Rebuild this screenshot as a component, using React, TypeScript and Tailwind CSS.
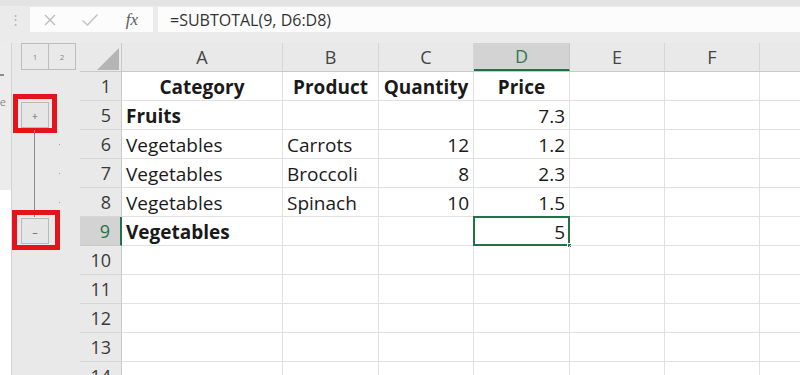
import type { ReactNode } from "react"

const cols = [
  { id: "A", w: "w-[161px]" },
  { id: "B", w: "w-[96px]" },
  { id: "C", w: "w-[95px]" },
  { id: "D", w: "w-[96px]" },
  { id: "E", w: "w-[95px]" },
  { id: "F", w: "w-[95px]" },
]

type Cell = { v: string; bold?: boolean; align?: "left" | "center" | "right" }

const rows: { n: number; cells: Cell[] }[] = [
  {
    n: 1,
    cells: [
      { v: "Category", bold: true, align: "center" },
      { v: "Product", bold: true, align: "center" },
      { v: "Quantity", bold: true, align: "center" },
      { v: "Price", bold: true, align: "center" },
    ],
  },
  { n: 5, cells: [{ v: "Fruits", bold: true }, { v: "" }, { v: "" }, { v: "7.3", align: "right" }] },
  { n: 6, cells: [{ v: "Vegetables" }, { v: "Carrots" }, { v: "12", align: "right" }, { v: "1.2", align: "right" }] },
  { n: 7, cells: [{ v: "Vegetables" }, { v: "Broccoli" }, { v: "8", align: "right" }, { v: "2.3", align: "right" }] },
  { n: 8, cells: [{ v: "Vegetables" }, { v: "Spinach" }, { v: "10", align: "right" }, { v: "1.5", align: "right" }] },
  { n: 9, cells: [{ v: "Vegetables", bold: true }, { v: "" }, { v: "" }, { v: "5", align: "right" }] },
  { n: 10, cells: [] },
  { n: 11, cells: [] },
  { n: 12, cells: [] },
  { n: 13, cells: [] },
  { n: 14, cells: [] },
]

function OutlineButton({ sign, red }: { sign: string; red: string }) {
  return (
    <div className="relative mt-px w-[28px] h-[26px] shrink-0 border border-[#b9b9b9] bg-[#e6e6e6] flex items-center justify-center text-[11px] leading-none text-[#6a6a6a]">
      {sign}
      <div className={`absolute border-[5px] border-[#e5141c] ${red}`} />
    </div>
  )
}

function Slot({ children }: { children?: ReactNode }) {
  return <div className="relative h-[29px] flex flex-col items-start pl-[9px]">{children}</div>
}

function Line({ full }: { full?: boolean }) {
  return <div className={`ml-[13px] w-px bg-[#8c8c8c] ${full ? "h-full" : "flex-1"}`} />
}

export default function App() {
  return (
    <div className="w-[800px] h-[375px] overflow-hidden bg-white font-['Open_Sans',sans-serif] flex flex-col">
      {/* formula bar */}
      <div className="h-[43px] shrink-0 bg-[#ebebeb] border-t-[6px] border-[#e3e3e3] flex items-start pt-px">
        <div className="w-[30px] h-[25px] flex items-center justify-center text-[13px] text-[#b5b5b5] leading-none">⋮</div>
        <div className="w-[123px] h-[25px] bg-[#fcfcfc] flex items-center">
          <div className="w-[40px] flex justify-center">
            <svg width="14" height="14" viewBox="0 0 14 14" fill="none" stroke="#bdbdbd" strokeWidth="1.3">
              <path d="M2 2 L12 12 M12 2 L2 12" />
            </svg>
          </div>
          <div className="w-[40px] flex justify-center">
            <svg width="18" height="14" viewBox="0 0 18 14" fill="none" stroke="#c2c2c2" strokeWidth="1.4">
              <path d="M1.5 7.5 L6.5 12 L16.5 1.5" />
            </svg>
          </div>
          <div className="w-[40px] flex justify-center pl-[4px] font-['Liberation_Serif',serif] italic text-[17px] leading-none text-[#5a5a5a]">
            fx
          </div>
        </div>
        <div className="ml-[5px] flex-1 h-[25px] bg-[#fcfcfc] flex items-center pl-[12px] text-[16px] text-[#333]">
          =SUBTOTAL(9, D6:D8)
        </div>
      </div>

      <div className="flex flex-1 min-h-0">
        {/* far left strip */}
        <div className="w-[12px] shrink-0 bg-[#ececec] border-r border-[#d3d3d3] flex flex-col overflow-hidden">
          <div className="h-[31px]" />
          <div className="h-[2px] w-[4px] bg-[#8a8a8a]" />
          <div className="h-[20px]" />
          <div className="-ml-[7px] text-[11px] leading-[11px] text-[#888] whitespace-nowrap">ne</div>
          <div className="h-[83px]" />
          <div className="flex-1 bg-white" />
        </div>

        {/* outline panel */}
        <div className="w-[68px] shrink-0 bg-[#e9e9e9] flex flex-col">
          <div className="h-[29px] pl-[9px] flex items-start">
            <div className="w-[28px] h-[27px] border border-[#bdbdbd] flex items-center justify-center text-[8px] text-[#8a8a8a]">1</div>
            <div className="w-[27px] h-[27px] border border-l-0 border-[#bdbdbd] flex items-center justify-center text-[8px] text-[#8a8a8a]">2</div>
          </div>
          <Slot />
          <Slot>
            <OutlineButton sign="+" red="left-[-9px] right-[-9px] top-[-9px] bottom-[-6px]" />
            <Line />
          </Slot>
          {[0, 1, 2].map((i) => (
            <Slot key={i}>
              <Line full />
              <div className="absolute left-[47px] top-[14px] w-px h-px bg-[#9d9d9d]" />
            </Slot>
          ))}
          <Slot>
            <OutlineButton sign="–" red="left-[-10px] right-[-12px] top-[-9px] bottom-[-7px]" />
          </Slot>
        </div>

        {/* sheet */}
        <div className="flex-1 flex flex-col">
          <div className="h-[29px] shrink-0 flex bg-[#e9e9e9] border-b border-[#c9c9c9]">
            <div className="w-[42px] shrink-0 relative border-r border-[#c9c9c9]">
              <svg className="absolute left-[17px] top-[5px]" width="22" height="22" viewBox="0 0 22 22">
                <path d="M22 0 L22 22 L0 22 Z" fill="#b5b5b5" />
              </svg>
            </div>
            {cols.map((c) => (
              <div
                key={c.id}
                className={`${c.w} shrink-0 flex items-center justify-center text-[18px] border-r ${
                  c.id === "D"
                    ? "bg-[#d3d3d3] text-[#2f7a55] border-[#c9c9c9] border-b-2 border-b-[#217346]"
                    : "text-[#444] border-[#d6d6d6]"
                }`}
              >
                {c.id}
              </div>
            ))}
            <div className="flex-1" />
          </div>

          {rows.map((r) => {
            const sel = r.n === 9
            return (
              <div key={r.n} className="h-[29px] shrink-0 flex">
                <div
                  className={`w-[42px] shrink-0 flex items-center justify-end pr-[10px] text-[18px] border-b ${
                    sel
                      ? "bg-[#d3d3d3] text-[#217346] border-[#c9c9c9] border-r-2 border-r-[#217346]"
                      : "bg-[#e9e9e9] text-[#3a3a3a] border-[#d6d6d6] border-r border-r-[#c9c9c9]"
                  }`}
                >
                  {r.n}
                </div>
                {cols.map((c, i) => {
                  const cell = r.cells[i]
                  const isSel = sel && c.id === "D"
                  return (
                    <div
                      key={c.id}
                      className={`${c.w} shrink-0 relative border-r border-b border-[#e1e1e1] flex items-center px-[4px] pt-[2px] text-[19px] text-[#1a1a1a] whitespace-nowrap ${
                        cell?.align === "center" ? "justify-center" : cell?.align === "right" ? "justify-end" : "justify-start"
                      } ${cell?.bold ? "font-bold" : ""}`}
                    >
                      {cell?.v}
                      {isSel && (
                        <>
                          <div className="absolute -left-px -top-px -right-px -bottom-px border-2 border-[#217346]" />
                          <div className="absolute right-[-3px] bottom-[-3px] w-[5px] h-[5px] bg-[#217346] border border-white" />
                        </>
                      )}
                    </div>
                  )
                })}
                <div className="flex-1 border-b border-[#e1e1e1]" />
              </div>
            )
          })}
        </div>
      </div>
    </div>
  )
}
